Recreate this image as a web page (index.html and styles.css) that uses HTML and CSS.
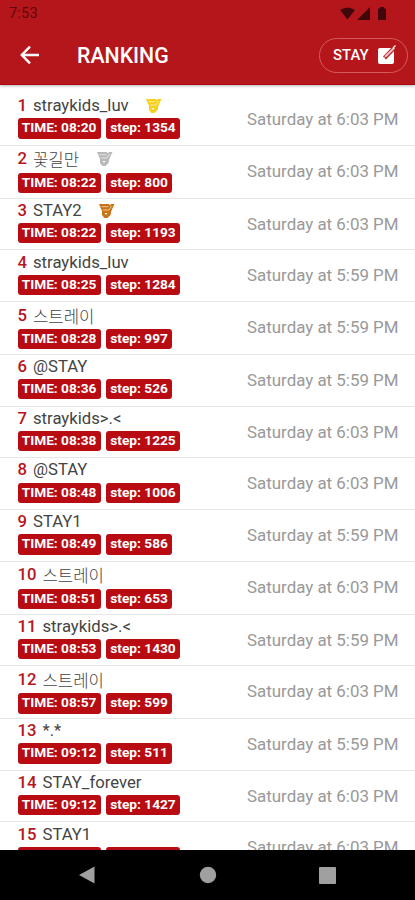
FILE: index.html
```html
<!DOCTYPE html>
<html lang="en">
<head>
    <meta charset="utf-8" />
    <meta name="viewport" content="width=device-width, initial-scale=1" />
    <title>Ranking</title>
    <link rel="stylesheet" href="styles.css">
</head>
<body>
    <header>
        <div class="status">
            <span>7:53</span>
            <svg width="48" height="14" viewBox="0 0 48 14">
                <path d="M0 3Q7.5-2 15 3L7.500 12.500Z"/>
                <path d="M17 13L30 0V13Z"/>
                <path d="M38 1.500h2V0h4v1.500h2V13h-8Z"/>
            </svg>
        </div>
        <div class="toolbar">
            <svg class="back" width="20" height="20" viewBox="0 0 20 20">
                <path d="M19 10H2M10 1.700L1.800 10L10 18.300"/>
            </svg>
            <h1>RANKING</h1>
            <button class="stay">
                STAY
                <svg width="20" height="20" viewBox="0 0 20 20">
                    <rect x="0" y="3" width="16" height="16" rx="2" fill="#fff"/>
                    <path d="M6.500 13L17 2" stroke="#b5161c" stroke-width="4"/>
                    <path d="M6 13L7 10.500L15.500 2L17 3.500L8.500 12Z" fill="#f0c0c0"/>
                    <path d="M15 3L17.500 0.500" stroke="#fff" stroke-width="1.200"/>
                </svg>
            </button>
        </div>
    </header>

    <main id="ranking"></main>

    <nav>
        <svg width="18" height="20" viewBox="0 0 18 20"><path d="M0 10L15.500 1.500V18.500Z"/></svg>
        <svg width="18" height="20" viewBox="0 0 18 20"><circle cx="9" cy="10" r="8.200"/></svg>
        <svg width="18" height="20" viewBox="0 0 18 20"><rect x="0" y="2" width="17" height="17" rx="1"/></svg>
    </nav>

    <script type="module">

        const players = [
            ["straykids_luv", "08:20", 1354, "6:03", "gold"],
            ["꽃길만", "08:22", 800, "6:03", "silver"],
            ["STAY2", "08:22", 1193, "6:03", "bronze"],
            ["straykids_luv", "08:25", 1284, "5:59"],
            ["스트레이", "08:28", 997, "5:59"],
            ["@STAY", "08:36", 526, "5:59"],
            ["straykids>.<", "08:38", 1225, "6:03"],
            ["@STAY", "08:48", 1006, "6:03"],
            ["STAY1", "08:49", 586, "5:59"],
            ["스트레이", "08:51", 653, "6:03"],
            ["straykids>.<", "08:53", 1430, "5:59"],
            ["스트레이", "08:57", 599, "6:03"],
            ["*.*", "09:12", 511, "5:59"],
            ["STAY_forever", "09:12", 1427, "6:03"],
            ["STAY1", "09:15", 1210, "6:03"],
        ]

        const medal_svg = `<svg width="17" height="16" viewBox="0 0 17 16">
            <path class="ribbon" d="M1 1H11L12 2.500L13 1H16.500L13.500 7.500L12.500 12L9.500 15H6.500L4 12V8Z"/>
            <path class="slit" d="M3.500 3.700H10.500M5 7H11L13.500 3"/>
            <path class="core" d="M6.500 10H9.500L8.500 11.500H7.500Z"/>
        </svg>`

        function span(class_name, text) {
            const $span = document.createElement('span')
            $span.className = class_name
            $span.textContent = text
            return $span
        }

        function generate_row([name, time, step, hour, medal], i) {
            const $row = document.createElement('div')
            $row.className = "row"

            const $player = document.createElement('div')
            const $name = document.createElement('div')
            $name.className = /[가-힣]/.test(name) ? "name hangul" : "name"
            $name.append(span("rank", i + 1), span("nick", name))
            if (medal) {
                const $medal = span("medal " + medal, "")
                $medal.innerHTML = medal_svg
                $name.append($medal)
            }

            const $badges = document.createElement('div')
            $badges.className = "badges"
            $badges.append(span("badge", "TIME: " + time), span("badge", "step: " + step))

            $player.append($name, $badges)
            $row.append($player, span("date", "Saturday at " + hour + " PM"))
            return $row
        }

        document.getElementById("ranking").append(...players.map(generate_row))

    </script>
</body>
</html>
```
FILE: styles.css
```css
body {
    margin: 0;
    height: 900px;
    display: flex;
    flex-direction: column;
    overflow: hidden;
    background-color: white;
    font-family: Roboto, "Noto Sans CJK KR", sans-serif;
}

header {
    flex: none;
    box-sizing: border-box;
    height: 85px;
    background-color: #b5161c;
    color: white;
    border-bottom: 1px solid #a90910;
    box-shadow: 0 1px 3px rgba(0, 0, 0, .3);
}

.status {
    display: flex;
    justify-content: space-between;
    align-items: center;
    height: 27px;
    padding: 0 27px 0 9px;
    color: #62070b;
    font-size: 14.5px;
    letter-spacing: .2px;
}
.status svg {
    fill: #41070a;
}

.toolbar {
    display: flex;
    align-items: center;
    height: 56px;
    padding: 0 7px 0 20px;
}

.back {
    fill: none;
    stroke: white;
    stroke-width: 2.4;
}

h1 {
    margin: 0 auto 0 37px;
    font-size: 21.3px;
    font-weight: 500;
}

.stay {
    display: flex;
    align-items: center;
    justify-content: space-between;
    box-sizing: border-box;
    width: 89px;
    height: 35px;
    padding: 0 9px 0 13px;
    border: 1px solid #d45b5c;
    border-radius: 18px;
    background: none;
    color: white;
    font: 500 14.9px Roboto, sans-serif;
}

main {
    flex: 1;
    min-height: 0;
    overflow: hidden;
    padding-top: 9.2px;
}

.row {
    display: flex;
    justify-content: space-between;
    box-sizing: border-box;
    height: 51.75px;
    padding: 0 16.5px 0 17.5px;
    border-bottom: 1px solid #e6e6e6;
}
.row:has(.hangul) {
    height: 52.7px;
}

.name {
    display: flex;
    align-items: center;
    height: 24.3px;
    color: #444;
    font-size: 16.7px;
    line-height: 24px;
}
.hangul {
    height: 27px;
}
.hangul .nick {
    font-family: "Noto Sans CJK KR", sans-serif;
    font-weight: 300;
    font-size: 16.7px;
}

.rank {
    margin-right: 6px;
    color: #b5161c;
    font-weight: 500;
}

.medal {
    display: flex;
    margin-left: 16.5px;
}
.gold { color: #f6cf18; }
.silver { color: #b9b9b9; }
.bronze { color: #c77414; }
.ribbon {
    fill: currentColor;
}
.slit {
    fill: none;
    stroke: white;
    stroke-width: .6;
}
.core {
    fill: white;
}

.badges {
    display: flex;
    gap: 5.5px;
}
.badge {
    box-sizing: border-box;
    height: 20.3px;
    padding: 0 4.2px;
    border-radius: 3px;
    background-color: #b90c12;
    color: white;
    font-size: 13.7px;
    font-weight: 700;
    line-height: 19px;
}

.date {
    color: #999;
    font-size: 16.9px;
    line-height: 51px;
}

nav {
    flex: none;
    display: flex;
    align-items: center;
    justify-content: center;
    gap: 102px;
    height: 50px;
    background-color: black;
}
nav svg {
    fill: #a0a0a0;
}
```
